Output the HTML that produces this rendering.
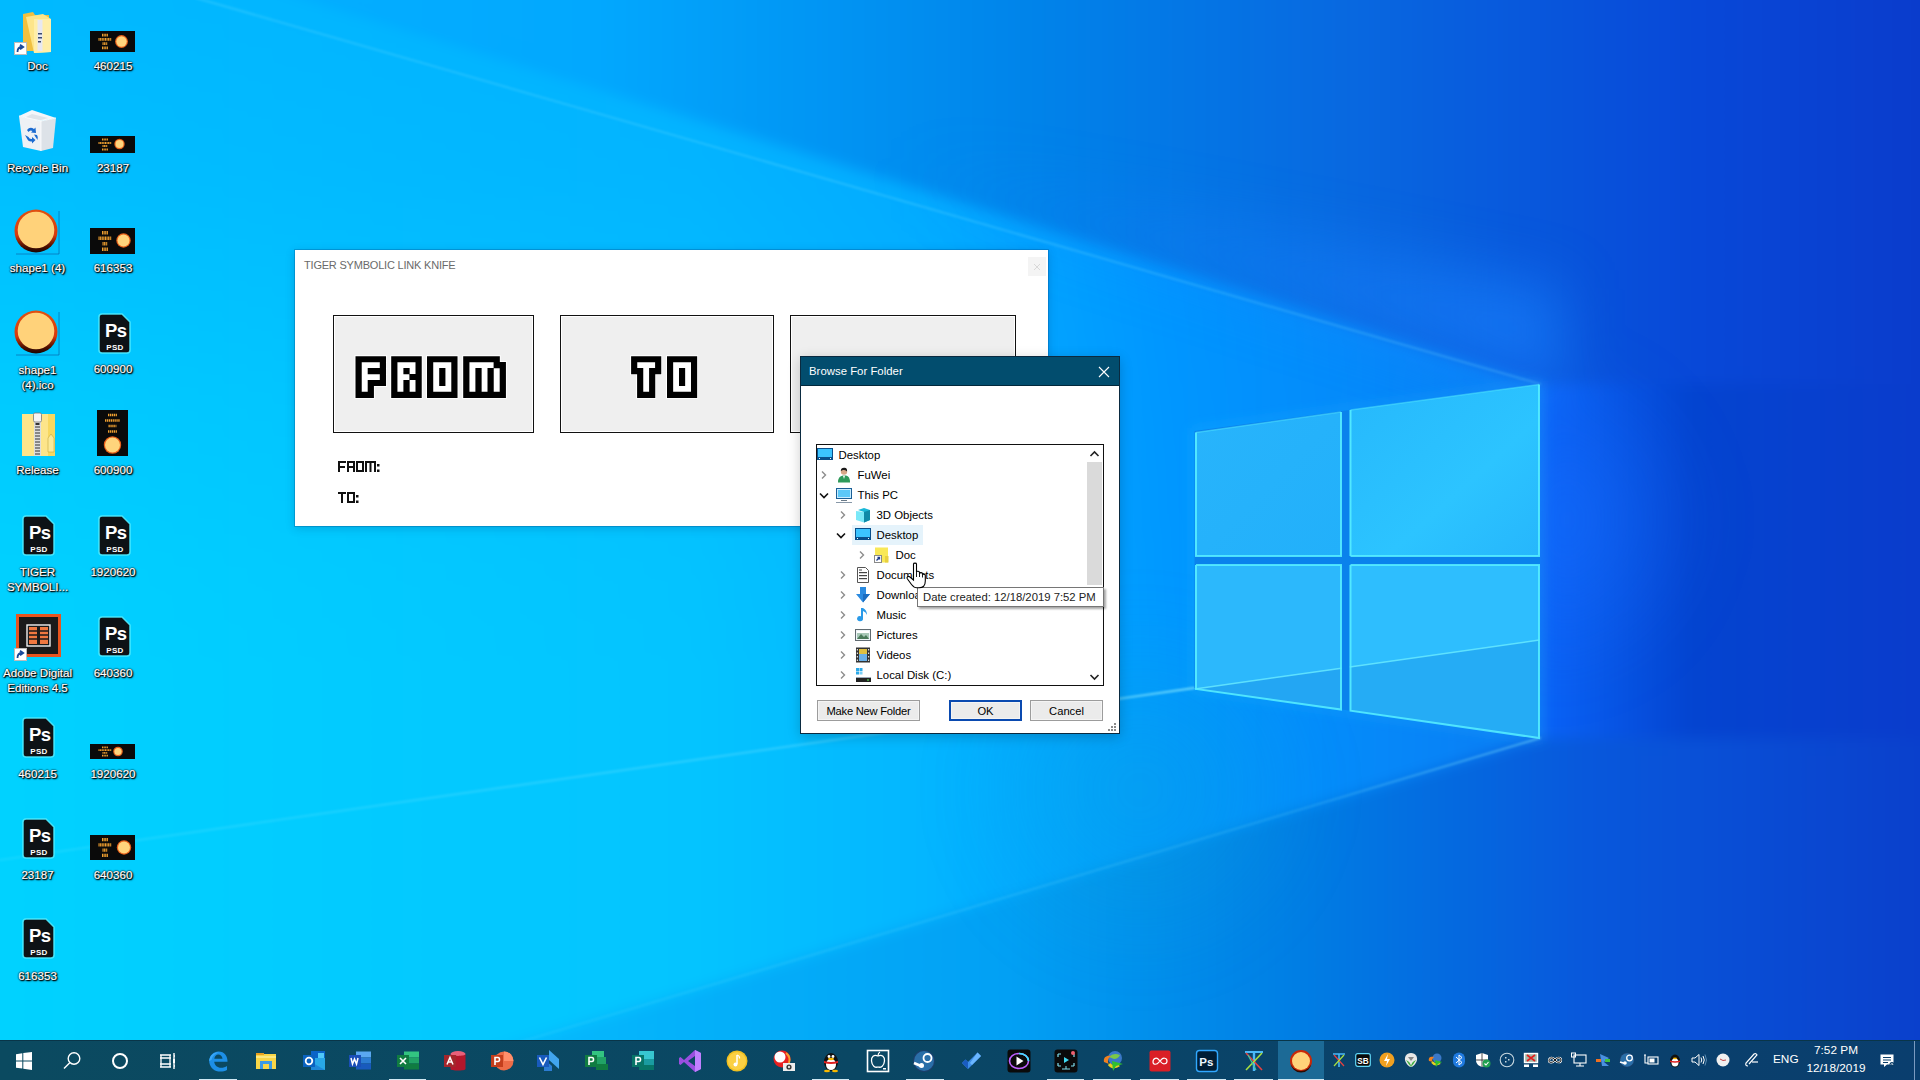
<!DOCTYPE html>
<html><head><meta charset="utf-8">
<style>
*{box-sizing:border-box}
html,body{margin:0;padding:0;width:1920px;height:1080px;overflow:hidden;font-family:"Liberation Sans",sans-serif;}
.abs{position:absolute}
#wall{position:absolute;left:0;top:0;width:1920px;height:1080px}
/* desktop icons */
.lbl{position:absolute;color:#fff;font-size:11.6px;line-height:15px;text-align:center;width:76px;-webkit-text-stroke:0.2px #fff;text-shadow:1px 1px 1px #000,0 0 1.5px #000,0 0 1.5px #000,1px 1px 2px rgba(0,0,0,.8);white-space:nowrap}
/* app window */
#app{position:absolute;left:295px;top:250px;width:753px;height:276px;background:#fff;box-shadow:0 0 0 1px rgba(0,60,120,.25),0 2px 9px rgba(0,40,90,.22)}
#app .title{position:absolute;left:9px;top:9px;font-size:11px;color:#6a6a6a;letter-spacing:-0.2px}
.bigbtn{position:absolute;top:65px;height:118px;border:1px solid #111;background:#efefef;box-shadow:inset 0 0 0 1px #fff}
.fclose{position:absolute;left:733px;top:7px;width:18px;height:19px;background:#f4f4f4}
/* dialog */
#dlg{position:absolute;left:800px;top:356px;width:320px;height:378px;background:#fff;border:1px solid #0a2a40;box-shadow:0 3px 12px rgba(0,0,0,.2)}
#dlg .tb{position:absolute;left:0;top:0;width:318px;height:29px;background:#024d6e;border-bottom:1px solid #02283c}
#dlg .tt{position:absolute;left:8px;top:8px;color:#fff;font-size:11.4px;}
.tree{position:absolute;left:15px;top:87px;width:288px;height:242px;border:1px solid #111;background:#fff;overflow:hidden}
.row{position:absolute;height:20px;font-size:11.4px;color:#000;line-height:20px;white-space:nowrap}
.btn{position:absolute;top:343px;height:21px;border:1px solid #9c9c9c;background:#ebebeb;font-size:11.2px;text-align:center;line-height:20.5px;color:#000;box-shadow:inset 0 0 0 1px #f4f4f4}
.tip{position:absolute;left:116px;top:230px;width:187px;height:20px;border:1px solid #767676;background:#fff;font-size:11.3px;line-height:18px;padding-left:5px;color:#222;white-space:nowrap;box-shadow:2px 2px 2px rgba(0,0,0,.35)}
/* taskbar */
#tb{position:absolute;left:0;top:1040px;width:1920px;height:40px;background:linear-gradient(90deg,#0b4a60 0%,#0a4764 45%,#0a416c 80%,#0a3e6e 100%);border-top:1px solid #093548}
.ind{position:absolute;top:38px;height:2px;background:#cfe8f3}
.ti{position:absolute;top:0;width:48px;height:40px}
</style></head>
<body>
<div style="position:absolute;left:0;top:0;width:1920px;height:1080px;overflow:hidden"><svg width="2080" height="1240" style="position:absolute;left:-80px;top:-80px;filter:blur(7px)"><defs>
<linearGradient id="gA" gradientUnits="userSpaceOnUse" x1="0" y1="0" x2="1540" y2="0">
<stop offset="0" stop-color="#00d2ff"/>
<stop offset="0.45" stop-color="#04c4ff"/>
<stop offset="0.6" stop-color="#04b6ff"/>
<stop offset="0.76" stop-color="#0098ff"/>
<stop offset="1" stop-color="#0a7cf4"/>
</linearGradient>
<linearGradient id="gB" gradientUnits="userSpaceOnUse" x1="200" y1="0" x2="1920" y2="0">
<stop offset="0" stop-color="#04b0ff"/>
<stop offset="0.23" stop-color="#02a8fe"/>
<stop offset="0.48" stop-color="#0084ea"/>
<stop offset="0.67" stop-color="#0868e0"/>
<stop offset="0.87" stop-color="#0848d8"/>
<stop offset="1" stop-color="#0a3ccc"/>
</linearGradient>
<linearGradient id="gC" gradientUnits="userSpaceOnUse" x1="1540" y1="0" x2="1920" y2="0">
<stop offset="0" stop-color="#0a64f8"/>
<stop offset="0.4" stop-color="#0444d0"/>
<stop offset="1" stop-color="#0a3ccc"/>
</linearGradient>
<linearGradient id="gD" gradientUnits="userSpaceOnUse" x1="400" y1="0" x2="1920" y2="0">
<stop offset="0" stop-color="#06c0ff"/>
<stop offset="0.4" stop-color="#02a0f4"/>
<stop offset="0.59" stop-color="#007ee4"/>
<stop offset="0.78" stop-color="#0858dc"/>
<stop offset="1" stop-color="#0a40cc"/>
</linearGradient>
<linearGradient id="gTopDark" gradientUnits="userSpaceOnUse" x1="0" y1="0" x2="0" y2="680"><stop offset="0" stop-color="#0088ff" stop-opacity="0.33"/><stop offset="0.25" stop-color="#0088ff" stop-opacity="0.26"/><stop offset="0.59" stop-color="#0088ff" stop-opacity="0.1"/><stop offset="0.85" stop-color="#0088ff" stop-opacity="0.02"/><stop offset="1" stop-color="#0088ff" stop-opacity="0"/></linearGradient>
<filter id="blur1" x="-5%" y="-5%" width="110%" height="110%"><feGaussianBlur stdDeviation="18"/></filter>
<filter id="blur2"><feGaussianBlur stdDeviation="1.2"/></filter>
<filter id="blur3" x="-20%" y="-20%" width="140%" height="140%"><feGaussianBlur stdDeviation="6"/></filter>
</defs><g transform="translate(80,80)">
<rect x="-40" y="-40" width="2000" height="1160" fill="url(#gA)"/>
<polygon points="200,-40 -40,-40 -40,-40 200,-40 1540,384 1540,738 396,1040 -40,1160 -40,-40" fill="url(#gA)"/>
<polygon points="189,-40 2000,-40 2000,384 1540,384" fill="url(#gB)"/>
<polygon points="1540,384 2000,384 2000,738 1540,738" fill="url(#gC)"/>
<polygon points="1540,738 2000,738 2000,1160 124,1160" fill="url(#gD)"/>
<polygon points="200,-40 1540,384 1540,700 -40,700 -40,-40" fill="url(#gTopDark)"/>

</g></svg></div>
<div style="position:absolute;left:0;top:0;width:1920px;height:1080px;overflow:hidden"><svg width="1920" height="1080" style="position:absolute;left:0;top:0;filter:blur(28px)"><defs><linearGradient id="gBand" gradientUnits="userSpaceOnUse" x1="1540" y1="0" x2="900" y2="0"><stop offset="0" stop-color="#1a84ff" stop-opacity="0.6"/><stop offset="0.5" stop-color="#1a84ff" stop-opacity="0.28"/><stop offset="1" stop-color="#1a84ff" stop-opacity="0"/></linearGradient><radialGradient id="gGlowR" gradientUnits="userSpaceOnUse" cx="1545" cy="520" r="170"><stop offset="0" stop-color="#1a70ff" stop-opacity="0.5"/><stop offset="1" stop-color="#1a70ff" stop-opacity="0"/></radialGradient></defs><polygon points="1560,390 900,195 900,150 1560,290" fill="url(#gBand)"/><rect x="1520" y="330" width="240" height="440" fill="url(#gGlowR)"/><radialGradient id="gFloor" gradientUnits="userSpaceOnUse" cx="1140" cy="790" r="190"><stop offset="0" stop-color="#10a8d0" stop-opacity="0.28"/><stop offset="1" stop-color="#10a8d0" stop-opacity="0"/></radialGradient><rect x="960" y="560" width="540" height="540" fill="url(#gFloor)"/></svg></div>
<svg id="wall" style="position:absolute;left:0;top:0" width="1920" height="1080" viewBox="0 0 1920 1080">
<defs><filter id="blur2"><feGaussianBlur stdDeviation="1.2"/></filter><filter id="blur3" x="-20%" y="-20%" width="140%" height="140%"><feGaussianBlur stdDeviation="6"/></filter></defs>

<!-- beam lines -->
<g filter="url(#blur2)" stroke-linecap="round">
<line x1="196" y1="-2" x2="1540" y2="384" stroke="#7fe6ff" stroke-opacity="0.24" stroke-width="2"/>
<linearGradient id="gBR" gradientUnits="userSpaceOnUse" x1="1540" y1="738" x2="396" y2="1079"><stop offset="0" stop-color="#8ff0ff" stop-opacity="0.45"/><stop offset="0.2" stop-color="#7fe6ff" stop-opacity="0.2"/><stop offset="1" stop-color="#7fe6ff" stop-opacity="0.12"/></linearGradient><line x1="1540" y1="738" x2="396" y2="1079" stroke="url(#gBR)" stroke-width="2"/>
<linearGradient id="gBL" gradientUnits="userSpaceOnUse" x1="1194" y1="688" x2="0" y2="860"><stop offset="0" stop-color="#9ff8ff" stop-opacity="0.7"/><stop offset="0.12" stop-color="#9ff0ff" stop-opacity="0.3"/><stop offset="1" stop-color="#9ff0ff" stop-opacity="0.12"/></linearGradient><line x1="1194" y1="688" x2="0" y2="860" stroke="url(#gBL)" stroke-width="2.2"/>
</g>
<!-- logo glow -->
<polygon points="1194.5,431 1540,384 1540,738.5 1194.5,688" fill="none" stroke="#40d8ff" stroke-opacity="0.18" stroke-width="6" filter="url(#blur3)"/>
<!-- gaps -->
<polygon points="1194.5,431 1540,384 1540,738.5 1194.5,688" fill="#0a82ec"/>
<!-- panes -->
<defs>
<linearGradient id="pTL" x1="0" y1="0" x2="1" y2="1"><stop offset="0" stop-color="#28b4fc"/><stop offset="1" stop-color="#22b0fa"/></linearGradient>
<linearGradient id="pTR" x1="0" y1="0" x2="1" y2="1"><stop offset="0" stop-color="#26b8fc"/><stop offset="0.6" stop-color="#2cc4ff"/><stop offset="1" stop-color="#26b6fc"/></linearGradient>
</defs>
<polygon points="1195,432.5 1341.5,412 1341.5,556 1195,556" fill="url(#pTL)"/>
<polygon points="1349.8,410 1539.5,384.5 1539.5,556 1349.8,556" fill="url(#pTR)"/>
<polygon points="1195,565 1341.5,565 1341.5,709.5 1195,689" fill="#2cb8fc"/>
<polygon points="1349.8,565 1539.5,565 1539.5,738 1349.8,710.7" fill="#2ebefe"/>
<!-- lower reflection region -->
<polygon points="1195,689 1341.5,668.2 1341.5,709.5" fill="#1890e8" fill-opacity="0.45"/>
<polygon points="1349.8,667 1539.5,640 1539.5,738 1349.8,710.7" fill="#1890e8" fill-opacity="0.4"/>
<g stroke="#70f0ff" stroke-opacity="0.75" stroke-width="1.5">
<line x1="1195" y1="689" x2="1341.5" y2="668.2"/>
<line x1="1349.8" y1="667" x2="1539.5" y2="640"/>
</g>
<!-- edges -->
<g fill="none" stroke="#58f0ff" stroke-width="2" stroke-opacity="0.85">
<path d="M1196 432.5 V556 H1341 V412 M1350.5 556 V410 M1539 384.5 V556 H1350.5"/>
<path d="M1196 565 V689 L1341 709.5 V565 H1196 M1350.5 565 V710.7 L1539 738 V565 H1350.5"/>
</g>
<g fill="none" stroke="#58f0ff" stroke-width="1.4" stroke-opacity="0.45">
<path d="M1196 432.5 L1341 412 M1350.5 410 L1539 384.5"/>
</g>
</svg>

<div id="icons"><svg class="abs" style="left:21px;top:11px" width="34" height="42" viewBox="0 0 34 42"><path d="M2 3 L12 1 L14 4 H28 V40 H2 Z" fill="#f0c040"/><path d="M5 6 L22 3 L30 8 V41 L13 42 Z" fill="#fde58a"/><path d="M13 8 L30 8 V41 L13 42 Z" fill="#ffeea8"/><path d="M19 9 V40" stroke="#e8e8f0" stroke-width="5"/><g fill="#3a4a70"><rect x="17" y="22" width="4" height="1.5"/><rect x="17" y="26" width="4" height="1.5"/><rect x="17" y="30" width="3" height="1.5"/></g></svg>
<svg class="abs" style="left:14px;top:42px" width="13" height="13" viewBox="0 0 13 13"><rect x="0.5" y="0.5" width="12" height="12" fill="#fff" stroke="#bbb"/><path d="M3.5 10 Q3.5 5 8 5 M6 2.8 L9.2 5 L6 7.2" stroke="#1a4a9a" stroke-width="1.8" fill="none"/></svg>
<div class="lbl" style="left:-0.5px;top:58.3px">Doc</div>
<svg class="abs" style="left:90px;top:31px" width="45" height="21" viewBox="0 0 45 21"><rect width="45" height="21" fill="#0a0a0a"/><path d="M12.0 4.1 H18.0" stroke="#f0a030" stroke-width="2.6" stroke-dasharray="1.1 0.5"/><path d="M8.5 8.4 H21.5" stroke="#f0a030" stroke-width="2.6" stroke-dasharray="1.1 0.5"/><path d="M12.5 12.6 H17.5" stroke="#f0a030" stroke-width="2.6" stroke-dasharray="1.1 0.5"/><path d="M12.0 16.9 H18.0" stroke="#f0a030" stroke-width="2.6" stroke-dasharray="1.1 0.5"/><circle cx="31.5" cy="10.5" r="6.4" fill="#e8601a"/><circle cx="31.5" cy="10.5" r="5.2" fill="#ffd47c"/></svg>
<div class="lbl" style="left:75px;top:58.3px">460215</div>
<svg class="abs" style="left:18px;top:109px" width="40" height="44" viewBox="0 0 40 44"><path d="M1 7 L14 1 L38 9 L23 12 Z" fill="#f4f6fa"/><path d="M4 10 L14 5 L30 9 L23 11 Z" fill="#dfe4ea"/><path d="M1 7 L23 12 L23 42 L5 38 Z" fill="#eef1f5"/><path d="M23 12 L38 9 L35 39 L23 42 Z" fill="#dde2e8"/><path d="M1 7 L23 12 L38 9 M23 12 V42" fill="none" stroke="#fff" stroke-width="0.8"/><path d="M9 21 Q12 17 16 20 L17.5 18.5 L18 24 L13 23.5 L14.5 22 Q12 20.5 10.5 23 Z" fill="#1a6ad0"/><path d="M7 26 L9.5 30.5 Q10.5 33 14 32.5 L14 34.5 L17.5 31 L14 28 L14 30 Q11.5 30.5 10.5 28 Z" fill="#1a6ad0"/><path d="M19 26 L16 25.5 L19.5 31 Q20.5 28 19 26 Z" fill="#1a6ad0"/></svg>
<div class="lbl" style="left:-0.5px;top:159.5px">Recycle Bin</div>
<svg class="abs" style="left:90px;top:136px" width="45" height="17" viewBox="0 0 45 17"><rect width="45" height="17" fill="#0a0a0a"/><path d="M12.0 3.6 H18.0" stroke="#f0a030" stroke-width="2.0" stroke-dasharray="1.1 0.5"/><path d="M8.5 6.9 H21.5" stroke="#f0a030" stroke-width="2.0" stroke-dasharray="1.1 0.5"/><path d="M12.5 10.1 H17.5" stroke="#f0a030" stroke-width="2.0" stroke-dasharray="1.1 0.5"/><path d="M12.0 13.4 H18.0" stroke="#f0a030" stroke-width="2.0" stroke-dasharray="1.1 0.5"/><circle cx="29.5" cy="8" r="5.2" fill="#e8601a"/><circle cx="29.5" cy="8" r="4" fill="#ffd47c"/></svg>
<div class="lbl" style="left:75px;top:159.5px">23187</div>
<svg class="abs" style="left:13.5px;top:209px" width="46" height="46" viewBox="0 0 46 46"><defs><linearGradient id="cr209" x1="0" y1="0" x2="0" y2="1"><stop offset="0" stop-color="#e05010"/><stop offset="0.6" stop-color="#d83a0c"/><stop offset="0.85" stop-color="#501000"/><stop offset="1" stop-color="#1a0400"/></linearGradient></defs><circle cx="22" cy="22" r="21.5" fill="url(#cr209)"/><circle cx="22" cy="21" r="18.3" fill="#ffd27a"/><path d="M45 2 V45 H2" fill="none" stroke="#0a5aa0" stroke-width="1" stroke-opacity="0.6"/></svg>
<div class="lbl" style="left:-0.5px;top:260.4px">shape1 (4)</div>
<svg class="abs" style="left:90px;top:228px" width="45" height="26" viewBox="0 0 45 26"><rect width="45" height="26" fill="#0a0a0a"/><path d="M12.0 4.8 H18.0" stroke="#f0a030" stroke-width="3.4" stroke-dasharray="1.1 0.5"/><path d="M8.5 10.2 H21.5" stroke="#f0a030" stroke-width="3.4" stroke-dasharray="1.1 0.5"/><path d="M12.5 15.8 H17.5" stroke="#f0a030" stroke-width="3.4" stroke-dasharray="1.1 0.5"/><path d="M12.0 21.2 H18.0" stroke="#f0a030" stroke-width="3.4" stroke-dasharray="1.1 0.5"/><circle cx="33.5" cy="12.5" r="7.2" fill="#e8601a"/><circle cx="33.5" cy="12.5" r="6" fill="#ffd47c"/></svg>
<div class="lbl" style="left:75px;top:260.4px">616353</div>
<svg class="abs" style="left:13.5px;top:309.5px" width="46" height="46" viewBox="0 0 46 46"><defs><linearGradient id="cr309" x1="0" y1="0" x2="0" y2="1"><stop offset="0" stop-color="#e05010"/><stop offset="0.6" stop-color="#d83a0c"/><stop offset="0.85" stop-color="#501000"/><stop offset="1" stop-color="#1a0400"/></linearGradient></defs><circle cx="22" cy="22" r="21.5" fill="url(#cr309)"/><circle cx="22" cy="21" r="18.3" fill="#ffd27a"/><path d="M45 2 V45 H2" fill="none" stroke="#0a5aa0" stroke-width="1" stroke-opacity="0.6"/></svg>
<div class="lbl" style="left:-0.5px;top:362.0px">shape1<br>(4).ico</div>
<svg class="abs" style="left:97.5px;top:312.5px" width="34" height="42" viewBox="0 0 34 42"><path d="M4 1 H24 L32 9 V37 Q32 40 29 40 H4 Q1 40 1 37 V4 Q1 1 4 1 Z" fill="#0d1216" stroke="#50ecff" stroke-opacity="0.9" stroke-width="1.5"/><text x="7" y="23.5" font-family="Liberation Sans" font-weight="bold" font-size="18.5" fill="#fff" letter-spacing="-0.5">Ps</text><text x="8.3" y="36.5" font-family="Liberation Sans" font-weight="bold" font-size="8" fill="#fff" letter-spacing="0.3">PSD</text></svg>
<div class="lbl" style="left:75px;top:361.2px">600900</div>
<svg class="abs" style="left:21px;top:412px" width="36" height="45" viewBox="0 0 36 45"><rect x="1" y="2" width="33" height="42" fill="#fde58a"/><rect x="27" y="2" width="7" height="42" fill="#f8d860"/><path d="M27 26 L30 22 L33 26 V40 H27 Z" fill="#fcea98" stroke="#c8a840" stroke-width="0.6"/><rect x="13" y="1" width="7" height="43" fill="#ddd"/><path d="M14 6 H19 M14 9 H19 M14 12 H19 M14 15 H19 M14 18 H19 M14 21 H19 M14 24 H19 M14 27 H19 M14 30 H19 M14 33 H19 M14 36 H19 M14 39 H19 M14 42 H19" stroke="#333" stroke-width="1"/><rect x="12.5" y="1" width="8" height="9" rx="1.5" fill="#f4f4f4" stroke="#777" stroke-width="0.8"/><rect x="15" y="11" width="3" height="2" fill="#333"/></svg>
<div class="lbl" style="left:-0.5px;top:462.0px">Release</div>
<svg class="abs" style="left:97px;top:410px" width="31" height="46" viewBox="0 0 31 46"><rect width="31" height="46" fill="#0a0a0a"/><path d="M11.0 5.0 H20.0" stroke="#f0a030" stroke-width="2.4" stroke-dasharray="1.3 0.6"/><path d="M8.0 10.5 H23.0" stroke="#f0a030" stroke-width="2.4" stroke-dasharray="1.3 0.6"/><path d="M11.5 16.0 H19.5" stroke="#f0a030" stroke-width="2.4" stroke-dasharray="1.3 0.6"/><path d="M11.0 21.5 H20.0" stroke="#f0a030" stroke-width="2.4" stroke-dasharray="1.3 0.6"/><circle cx="15.5" cy="35" r="8.7" fill="#e8601a"/><circle cx="15.5" cy="35" r="7.5" fill="#ffd47c"/></svg>
<div class="lbl" style="left:75px;top:462.0px">600900</div>
<svg class="abs" style="left:21.5px;top:514.5px" width="34" height="42" viewBox="0 0 34 42"><path d="M4 1 H24 L32 9 V37 Q32 40 29 40 H4 Q1 40 1 37 V4 Q1 1 4 1 Z" fill="#0d1216" stroke="#50ecff" stroke-opacity="0.9" stroke-width="1.5"/><text x="7" y="23.5" font-family="Liberation Sans" font-weight="bold" font-size="18.5" fill="#fff" letter-spacing="-0.5">Ps</text><text x="8.3" y="36.5" font-family="Liberation Sans" font-weight="bold" font-size="8" fill="#fff" letter-spacing="0.3">PSD</text></svg>
<div class="lbl" style="left:-0.5px;top:563.7px">TIGER<br>SYMBOLI...</div>
<svg class="abs" style="left:97.5px;top:514.5px" width="34" height="42" viewBox="0 0 34 42"><path d="M4 1 H24 L32 9 V37 Q32 40 29 40 H4 Q1 40 1 37 V4 Q1 1 4 1 Z" fill="#0d1216" stroke="#50ecff" stroke-opacity="0.9" stroke-width="1.5"/><text x="7" y="23.5" font-family="Liberation Sans" font-weight="bold" font-size="18.5" fill="#fff" letter-spacing="-0.5">Ps</text><text x="8.3" y="36.5" font-family="Liberation Sans" font-weight="bold" font-size="8" fill="#fff" letter-spacing="0.3">PSD</text></svg>
<div class="lbl" style="left:75px;top:563.7px">1920620</div>
<svg class="abs" style="left:16px;top:614px" width="45" height="43" viewBox="0 0 45 43"><rect x="1.5" y="1.5" width="42" height="40" fill="#1a1a1a" stroke="#e8541e" stroke-width="3"/><rect x="11" y="11" width="23" height="21" fill="none" stroke="#f0f0f0" stroke-width="1.4"/><g fill="#f07840"><rect x="13" y="13" width="8" height="17"/><rect x="24" y="13" width="8" height="17"/></g><g stroke="#1a1a1a" stroke-width="1.3"><path d="M13 17 H21 M13 21 H21 M13 25 H21 M24 17 H32 M24 21 H32 M24 25 H32"/></g></svg>
<svg class="abs" style="left:14px;top:648px" width="13" height="13" viewBox="0 0 13 13"><rect x="0.5" y="0.5" width="12" height="12" fill="#fff" stroke="#bbb"/><path d="M3.5 10 Q3.5 5 8 5 M6 2.8 L9.2 5 L6 7.2" stroke="#1a4a9a" stroke-width="1.8" fill="none"/></svg>
<div class="lbl" style="left:-0.5px;top:664.7px">Adobe Digital<br>Editions 4.5</div>
<svg class="abs" style="left:97.5px;top:615.5px" width="34" height="42" viewBox="0 0 34 42"><path d="M4 1 H24 L32 9 V37 Q32 40 29 40 H4 Q1 40 1 37 V4 Q1 1 4 1 Z" fill="#0d1216" stroke="#50ecff" stroke-opacity="0.9" stroke-width="1.5"/><text x="7" y="23.5" font-family="Liberation Sans" font-weight="bold" font-size="18.5" fill="#fff" letter-spacing="-0.5">Ps</text><text x="8.3" y="36.5" font-family="Liberation Sans" font-weight="bold" font-size="8" fill="#fff" letter-spacing="0.3">PSD</text></svg>
<div class="lbl" style="left:75px;top:664.7px">640360</div>
<svg class="abs" style="left:21.5px;top:716.5px" width="34" height="42" viewBox="0 0 34 42"><path d="M4 1 H24 L32 9 V37 Q32 40 29 40 H4 Q1 40 1 37 V4 Q1 1 4 1 Z" fill="#0d1216" stroke="#50ecff" stroke-opacity="0.9" stroke-width="1.5"/><text x="7" y="23.5" font-family="Liberation Sans" font-weight="bold" font-size="18.5" fill="#fff" letter-spacing="-0.5">Ps</text><text x="8.3" y="36.5" font-family="Liberation Sans" font-weight="bold" font-size="8" fill="#fff" letter-spacing="0.3">PSD</text></svg>
<div class="lbl" style="left:-0.5px;top:765.7px">460215</div>
<svg class="abs" style="left:90px;top:744px" width="45" height="15" viewBox="0 0 45 15"><rect width="45" height="15" fill="#0a0a0a"/><path d="M12.0 3.4 H18.0" stroke="#f0a030" stroke-width="1.7" stroke-dasharray="1.1 0.5"/><path d="M8.5 6.1 H21.5" stroke="#f0a030" stroke-width="1.7" stroke-dasharray="1.1 0.5"/><path d="M12.5 8.9 H17.5" stroke="#f0a030" stroke-width="1.7" stroke-dasharray="1.1 0.5"/><path d="M12.0 11.6 H18.0" stroke="#f0a030" stroke-width="1.7" stroke-dasharray="1.1 0.5"/><circle cx="28" cy="7.5" r="4.8" fill="#e8601a"/><circle cx="28" cy="7.5" r="3.6" fill="#ffd47c"/></svg>
<div class="lbl" style="left:75px;top:765.7px">1920620</div>
<svg class="abs" style="left:21.5px;top:817.5px" width="34" height="42" viewBox="0 0 34 42"><path d="M4 1 H24 L32 9 V37 Q32 40 29 40 H4 Q1 40 1 37 V4 Q1 1 4 1 Z" fill="#0d1216" stroke="#50ecff" stroke-opacity="0.9" stroke-width="1.5"/><text x="7" y="23.5" font-family="Liberation Sans" font-weight="bold" font-size="18.5" fill="#fff" letter-spacing="-0.5">Ps</text><text x="8.3" y="36.5" font-family="Liberation Sans" font-weight="bold" font-size="8" fill="#fff" letter-spacing="0.3">PSD</text></svg>
<div class="lbl" style="left:-0.5px;top:866.7px">23187</div>
<svg class="abs" style="left:90px;top:835px" width="45" height="25" viewBox="0 0 45 25"><rect width="45" height="25" fill="#0a0a0a"/><path d="M12.0 4.6 H18.0" stroke="#f0a030" stroke-width="3.3" stroke-dasharray="1.1 0.5"/><path d="M8.5 9.9 H21.5" stroke="#f0a030" stroke-width="3.3" stroke-dasharray="1.1 0.5"/><path d="M12.5 15.1 H17.5" stroke="#f0a030" stroke-width="3.3" stroke-dasharray="1.1 0.5"/><path d="M12.0 20.4 H18.0" stroke="#f0a030" stroke-width="3.3" stroke-dasharray="1.1 0.5"/><circle cx="34" cy="12.5" r="7.2" fill="#e8601a"/><circle cx="34" cy="12.5" r="6" fill="#ffd47c"/></svg>
<div class="lbl" style="left:75px;top:866.7px">640360</div>
<svg class="abs" style="left:21.5px;top:917.5px" width="34" height="42" viewBox="0 0 34 42"><path d="M4 1 H24 L32 9 V37 Q32 40 29 40 H4 Q1 40 1 37 V4 Q1 1 4 1 Z" fill="#0d1216" stroke="#50ecff" stroke-opacity="0.9" stroke-width="1.5"/><text x="7" y="23.5" font-family="Liberation Sans" font-weight="bold" font-size="18.5" fill="#fff" letter-spacing="-0.5">Ps</text><text x="8.3" y="36.5" font-family="Liberation Sans" font-weight="bold" font-size="8" fill="#fff" letter-spacing="0.3">PSD</text></svg>
<div class="lbl" style="left:-0.5px;top:967.7px">616353</div></div>

<div id="app">
  <div class="title">TIGER SYMBOLIC LINK KNIFE</div>
  <div class="fclose"><svg class="abs" style="left:5px;top:6px" width="8" height="8"><path d="M1 1 L7 7 M7 1 L1 7" stroke="#d8d8d8" stroke-width="1"/></svg></div>
  <div class="bigbtn" style="left:38px;width:201px"></div>
  <div class="bigbtn" style="left:265px;width:214px"></div>
  <div class="bigbtn" style="left:495px;width:226px"></div>
  <svg class="abs" style="left:0;top:0" width="753" height="276"><path fill="#fff" d="M59.5 105.2h8.1v7.9h-8.1zM65.6 105.2h8.1v7.9h-8.1zM71.7 105.2h8.1v7.9h-8.1zM77.7 105.2h8.1v7.9h-8.1zM83.8 105.2h8.1v7.9h-8.1zM59.5 111.1h8.1v7.9h-8.1zM83.8 111.1h8.1v7.9h-8.1zM59.5 117.1h8.1v7.9h-8.1zM71.7 117.1h8.1v7.9h-8.1zM77.7 117.1h8.1v7.9h-8.1zM83.8 117.1h8.1v7.9h-8.1zM59.5 123.0h8.1v7.9h-8.1zM83.8 123.0h8.1v7.9h-8.1zM59.5 129.0h8.1v7.9h-8.1zM71.7 129.0h8.1v7.9h-8.1zM77.7 129.0h8.1v7.9h-8.1zM83.8 129.0h8.1v7.9h-8.1zM59.5 134.9h8.1v7.9h-8.1zM71.7 134.9h8.1v7.9h-8.1zM59.5 140.8h8.1v7.9h-8.1zM65.6 140.8h8.1v7.9h-8.1zM71.7 140.8h8.1v7.9h-8.1zM95.2 105.2h8.1v7.9h-8.1zM101.3 105.2h8.1v7.9h-8.1zM107.4 105.2h8.1v7.9h-8.1zM113.4 105.2h8.1v7.9h-8.1zM119.5 105.2h8.1v7.9h-8.1zM95.2 111.1h8.1v7.9h-8.1zM119.5 111.1h8.1v7.9h-8.1zM95.2 117.1h8.1v7.9h-8.1zM107.4 117.1h8.1v7.9h-8.1zM119.5 117.1h8.1v7.9h-8.1zM95.2 123.0h8.1v7.9h-8.1zM113.4 123.0h8.1v7.9h-8.1zM119.5 123.0h8.1v7.9h-8.1zM95.2 129.0h8.1v7.9h-8.1zM107.4 129.0h8.1v7.9h-8.1zM119.5 129.0h8.1v7.9h-8.1zM95.2 134.9h8.1v7.9h-8.1zM107.4 134.9h8.1v7.9h-8.1zM119.5 134.9h8.1v7.9h-8.1zM95.2 140.8h8.1v7.9h-8.1zM101.3 140.8h8.1v7.9h-8.1zM107.4 140.8h8.1v7.9h-8.1zM113.4 140.8h8.1v7.9h-8.1zM119.5 140.8h8.1v7.9h-8.1zM131.0 105.2h8.1v7.9h-8.1zM137.1 105.2h8.1v7.9h-8.1zM143.2 105.2h8.1v7.9h-8.1zM149.2 105.2h8.1v7.9h-8.1zM155.3 105.2h8.1v7.9h-8.1zM131.0 111.1h8.1v7.9h-8.1zM155.3 111.1h8.1v7.9h-8.1zM131.0 117.1h8.1v7.9h-8.1zM143.2 117.1h8.1v7.9h-8.1zM155.3 117.1h8.1v7.9h-8.1zM131.0 123.0h8.1v7.9h-8.1zM143.2 123.0h8.1v7.9h-8.1zM155.3 123.0h8.1v7.9h-8.1zM131.0 129.0h8.1v7.9h-8.1zM143.2 129.0h8.1v7.9h-8.1zM155.3 129.0h8.1v7.9h-8.1zM131.0 134.9h8.1v7.9h-8.1zM155.3 134.9h8.1v7.9h-8.1zM131.0 140.8h8.1v7.9h-8.1zM137.1 140.8h8.1v7.9h-8.1zM143.2 140.8h8.1v7.9h-8.1zM149.2 140.8h8.1v7.9h-8.1zM155.3 140.8h8.1v7.9h-8.1zM167.2 105.2h8.1v7.9h-8.1zM173.3 105.2h8.1v7.9h-8.1zM179.4 105.2h8.1v7.9h-8.1zM185.4 105.2h8.1v7.9h-8.1zM191.5 105.2h8.1v7.9h-8.1zM197.6 105.2h8.1v7.9h-8.1zM167.2 111.1h8.1v7.9h-8.1zM197.6 111.1h8.1v7.9h-8.1zM203.7 111.1h8.1v7.9h-8.1zM167.2 117.1h8.1v7.9h-8.1zM179.4 117.1h8.1v7.9h-8.1zM191.5 117.1h8.1v7.9h-8.1zM203.7 117.1h8.1v7.9h-8.1zM167.2 123.0h8.1v7.9h-8.1zM179.4 123.0h8.1v7.9h-8.1zM191.5 123.0h8.1v7.9h-8.1zM203.7 123.0h8.1v7.9h-8.1zM167.2 129.0h8.1v7.9h-8.1zM179.4 129.0h8.1v7.9h-8.1zM191.5 129.0h8.1v7.9h-8.1zM203.7 129.0h8.1v7.9h-8.1zM167.2 134.9h8.1v7.9h-8.1zM179.4 134.9h8.1v7.9h-8.1zM191.5 134.9h8.1v7.9h-8.1zM203.7 134.9h8.1v7.9h-8.1zM167.2 140.8h8.1v7.9h-8.1zM173.3 140.8h8.1v7.9h-8.1zM179.4 140.8h8.1v7.9h-8.1zM185.4 140.8h8.1v7.9h-8.1zM191.5 140.8h8.1v7.9h-8.1zM197.6 140.8h8.1v7.9h-8.1zM203.7 140.8h8.1v7.9h-8.1zM66.6 112.1h6.2v6.0h-6.2zM72.7 112.1h6.2v6.0h-6.2zM78.7 112.1h6.2v6.0h-6.2zM66.6 118.1h6.2v6.0h-6.2zM66.6 124.0h6.2v6.0h-6.2zM72.7 124.0h6.2v6.0h-6.2zM78.7 124.0h6.2v6.0h-6.2zM66.6 130.0h6.2v6.0h-6.2zM66.6 135.9h6.2v6.0h-6.2zM102.3 112.1h6.2v6.0h-6.2zM108.4 112.1h6.2v6.0h-6.2zM114.4 112.1h6.2v6.0h-6.2zM102.3 118.1h6.2v6.0h-6.2zM114.4 118.1h6.2v6.0h-6.2zM102.3 124.0h6.2v6.0h-6.2zM108.4 124.0h6.2v6.0h-6.2zM102.3 130.0h6.2v6.0h-6.2zM114.4 130.0h6.2v6.0h-6.2zM102.3 135.9h6.2v6.0h-6.2zM114.4 135.9h6.2v6.0h-6.2zM138.1 112.1h6.2v6.0h-6.2zM144.2 112.1h6.2v6.0h-6.2zM150.2 112.1h6.2v6.0h-6.2zM138.1 118.1h6.2v6.0h-6.2zM150.2 118.1h6.2v6.0h-6.2zM138.1 124.0h6.2v6.0h-6.2zM150.2 124.0h6.2v6.0h-6.2zM138.1 130.0h6.2v6.0h-6.2zM150.2 130.0h6.2v6.0h-6.2zM138.1 135.9h6.2v6.0h-6.2zM144.2 135.9h6.2v6.0h-6.2zM150.2 135.9h6.2v6.0h-6.2zM174.3 112.1h6.2v6.0h-6.2zM180.4 112.1h6.2v6.0h-6.2zM186.4 112.1h6.2v6.0h-6.2zM192.5 112.1h6.2v6.0h-6.2zM174.3 118.1h6.2v6.0h-6.2zM186.4 118.1h6.2v6.0h-6.2zM198.6 118.1h6.2v6.0h-6.2zM174.3 124.0h6.2v6.0h-6.2zM186.4 124.0h6.2v6.0h-6.2zM198.6 124.0h6.2v6.0h-6.2zM174.3 130.0h6.2v6.0h-6.2zM186.4 130.0h6.2v6.0h-6.2zM198.6 130.0h6.2v6.0h-6.2zM174.3 135.9h6.2v6.0h-6.2zM186.4 135.9h6.2v6.0h-6.2zM198.6 135.9h6.2v6.0h-6.2zM335.1 105.2h8.0v7.9h-8.0zM341.1 105.2h8.0v7.9h-8.0zM347.1 105.2h8.0v7.9h-8.0zM353.1 105.2h8.0v7.9h-8.0zM359.1 105.2h8.0v7.9h-8.0zM335.1 111.1h8.0v7.9h-8.0zM359.1 111.1h8.0v7.9h-8.0zM335.1 117.1h8.0v7.9h-8.0zM341.1 117.1h8.0v7.9h-8.0zM353.1 117.1h8.0v7.9h-8.0zM359.1 117.1h8.0v7.9h-8.0zM341.1 123.0h8.0v7.9h-8.0zM353.1 123.0h8.0v7.9h-8.0zM341.1 129.0h8.0v7.9h-8.0zM353.1 129.0h8.0v7.9h-8.0zM341.1 134.9h8.0v7.9h-8.0zM353.1 134.9h8.0v7.9h-8.0zM341.1 140.8h8.0v7.9h-8.0zM347.1 140.8h8.0v7.9h-8.0zM353.1 140.8h8.0v7.9h-8.0zM371.0 105.2h8.0v7.9h-8.0zM377.0 105.2h8.0v7.9h-8.0zM383.0 105.2h8.0v7.9h-8.0zM389.0 105.2h8.0v7.9h-8.0zM395.0 105.2h8.0v7.9h-8.0zM371.0 111.1h8.0v7.9h-8.0zM395.0 111.1h8.0v7.9h-8.0zM371.0 117.1h8.0v7.9h-8.0zM383.0 117.1h8.0v7.9h-8.0zM395.0 117.1h8.0v7.9h-8.0zM371.0 123.0h8.0v7.9h-8.0zM383.0 123.0h8.0v7.9h-8.0zM395.0 123.0h8.0v7.9h-8.0zM371.0 129.0h8.0v7.9h-8.0zM383.0 129.0h8.0v7.9h-8.0zM395.0 129.0h8.0v7.9h-8.0zM371.0 134.9h8.0v7.9h-8.0zM395.0 134.9h8.0v7.9h-8.0zM371.0 140.8h8.0v7.9h-8.0zM377.0 140.8h8.0v7.9h-8.0zM383.0 140.8h8.0v7.9h-8.0zM389.0 140.8h8.0v7.9h-8.0zM395.0 140.8h8.0v7.9h-8.0zM342.1 112.1h6.1v6.0h-6.1zM348.1 112.1h6.1v6.0h-6.1zM354.1 112.1h6.1v6.0h-6.1zM348.1 118.1h6.1v6.0h-6.1zM348.1 124.0h6.1v6.0h-6.1zM348.1 130.0h6.1v6.0h-6.1zM348.1 135.9h6.1v6.0h-6.1zM378.0 112.1h6.1v6.0h-6.1zM384.0 112.1h6.1v6.0h-6.1zM390.0 112.1h6.1v6.0h-6.1zM378.0 118.1h6.1v6.0h-6.1zM390.0 118.1h6.1v6.0h-6.1zM378.0 124.0h6.1v6.0h-6.1zM390.0 124.0h6.1v6.0h-6.1zM378.0 130.0h6.1v6.0h-6.1zM390.0 130.0h6.1v6.0h-6.1zM378.0 135.9h6.1v6.0h-6.1zM384.0 135.9h6.1v6.0h-6.1zM390.0 135.9h6.1v6.0h-6.1z"/><path fill="#000" d="M60.5 106.2h6.23v6.09h-6.23zM66.6 106.2h6.23v6.09h-6.23zM72.7 106.2h6.23v6.09h-6.23zM78.7 106.2h6.23v6.09h-6.23zM84.8 106.2h6.23v6.09h-6.23zM60.5 112.1h6.23v6.09h-6.23zM84.8 112.1h6.23v6.09h-6.23zM60.5 118.1h6.23v6.09h-6.23zM72.7 118.1h6.23v6.09h-6.23zM78.7 118.1h6.23v6.09h-6.23zM84.8 118.1h6.23v6.09h-6.23zM60.5 124.0h6.23v6.09h-6.23zM84.8 124.0h6.23v6.09h-6.23zM60.5 130.0h6.23v6.09h-6.23zM72.7 130.0h6.23v6.09h-6.23zM78.7 130.0h6.23v6.09h-6.23zM84.8 130.0h6.23v6.09h-6.23zM60.5 135.9h6.23v6.09h-6.23zM72.7 135.9h6.23v6.09h-6.23zM60.5 141.8h6.23v6.09h-6.23zM66.6 141.8h6.23v6.09h-6.23zM72.7 141.8h6.23v6.09h-6.23zM96.2 106.2h6.23v6.09h-6.23zM102.3 106.2h6.23v6.09h-6.23zM108.4 106.2h6.23v6.09h-6.23zM114.4 106.2h6.23v6.09h-6.23zM120.5 106.2h6.23v6.09h-6.23zM96.2 112.1h6.23v6.09h-6.23zM120.5 112.1h6.23v6.09h-6.23zM96.2 118.1h6.23v6.09h-6.23zM108.4 118.1h6.23v6.09h-6.23zM120.5 118.1h6.23v6.09h-6.23zM96.2 124.0h6.23v6.09h-6.23zM114.4 124.0h6.23v6.09h-6.23zM120.5 124.0h6.23v6.09h-6.23zM96.2 130.0h6.23v6.09h-6.23zM108.4 130.0h6.23v6.09h-6.23zM120.5 130.0h6.23v6.09h-6.23zM96.2 135.9h6.23v6.09h-6.23zM108.4 135.9h6.23v6.09h-6.23zM120.5 135.9h6.23v6.09h-6.23zM96.2 141.8h6.23v6.09h-6.23zM102.3 141.8h6.23v6.09h-6.23zM108.4 141.8h6.23v6.09h-6.23zM114.4 141.8h6.23v6.09h-6.23zM120.5 141.8h6.23v6.09h-6.23zM132.0 106.2h6.23v6.09h-6.23zM138.1 106.2h6.23v6.09h-6.23zM144.2 106.2h6.23v6.09h-6.23zM150.2 106.2h6.23v6.09h-6.23zM156.3 106.2h6.23v6.09h-6.23zM132.0 112.1h6.23v6.09h-6.23zM156.3 112.1h6.23v6.09h-6.23zM132.0 118.1h6.23v6.09h-6.23zM144.2 118.1h6.23v6.09h-6.23zM156.3 118.1h6.23v6.09h-6.23zM132.0 124.0h6.23v6.09h-6.23zM144.2 124.0h6.23v6.09h-6.23zM156.3 124.0h6.23v6.09h-6.23zM132.0 130.0h6.23v6.09h-6.23zM144.2 130.0h6.23v6.09h-6.23zM156.3 130.0h6.23v6.09h-6.23zM132.0 135.9h6.23v6.09h-6.23zM156.3 135.9h6.23v6.09h-6.23zM132.0 141.8h6.23v6.09h-6.23zM138.1 141.8h6.23v6.09h-6.23zM144.2 141.8h6.23v6.09h-6.23zM150.2 141.8h6.23v6.09h-6.23zM156.3 141.8h6.23v6.09h-6.23zM168.2 106.2h6.23v6.09h-6.23zM174.3 106.2h6.23v6.09h-6.23zM180.4 106.2h6.23v6.09h-6.23zM186.4 106.2h6.23v6.09h-6.23zM192.5 106.2h6.23v6.09h-6.23zM198.6 106.2h6.23v6.09h-6.23zM168.2 112.1h6.23v6.09h-6.23zM198.6 112.1h6.23v6.09h-6.23zM204.7 112.1h6.23v6.09h-6.23zM168.2 118.1h6.23v6.09h-6.23zM180.4 118.1h6.23v6.09h-6.23zM192.5 118.1h6.23v6.09h-6.23zM204.7 118.1h6.23v6.09h-6.23zM168.2 124.0h6.23v6.09h-6.23zM180.4 124.0h6.23v6.09h-6.23zM192.5 124.0h6.23v6.09h-6.23zM204.7 124.0h6.23v6.09h-6.23zM168.2 130.0h6.23v6.09h-6.23zM180.4 130.0h6.23v6.09h-6.23zM192.5 130.0h6.23v6.09h-6.23zM204.7 130.0h6.23v6.09h-6.23zM168.2 135.9h6.23v6.09h-6.23zM180.4 135.9h6.23v6.09h-6.23zM192.5 135.9h6.23v6.09h-6.23zM204.7 135.9h6.23v6.09h-6.23zM168.2 141.8h6.23v6.09h-6.23zM174.3 141.8h6.23v6.09h-6.23zM180.4 141.8h6.23v6.09h-6.23zM186.4 141.8h6.23v6.09h-6.23zM192.5 141.8h6.23v6.09h-6.23zM198.6 141.8h6.23v6.09h-6.23zM204.7 141.8h6.23v6.09h-6.23zM336.1 106.2h6.15v6.09h-6.15zM342.1 106.2h6.15v6.09h-6.15zM348.1 106.2h6.15v6.09h-6.15zM354.1 106.2h6.15v6.09h-6.15zM360.1 106.2h6.15v6.09h-6.15zM336.1 112.1h6.15v6.09h-6.15zM360.1 112.1h6.15v6.09h-6.15zM336.1 118.1h6.15v6.09h-6.15zM342.1 118.1h6.15v6.09h-6.15zM354.1 118.1h6.15v6.09h-6.15zM360.1 118.1h6.15v6.09h-6.15zM342.1 124.0h6.15v6.09h-6.15zM354.1 124.0h6.15v6.09h-6.15zM342.1 130.0h6.15v6.09h-6.15zM354.1 130.0h6.15v6.09h-6.15zM342.1 135.9h6.15v6.09h-6.15zM354.1 135.9h6.15v6.09h-6.15zM342.1 141.8h6.15v6.09h-6.15zM348.1 141.8h6.15v6.09h-6.15zM354.1 141.8h6.15v6.09h-6.15zM372.0 106.2h6.15v6.09h-6.15zM378.0 106.2h6.15v6.09h-6.15zM384.0 106.2h6.15v6.09h-6.15zM390.0 106.2h6.15v6.09h-6.15zM396.0 106.2h6.15v6.09h-6.15zM372.0 112.1h6.15v6.09h-6.15zM396.0 112.1h6.15v6.09h-6.15zM372.0 118.1h6.15v6.09h-6.15zM384.0 118.1h6.15v6.09h-6.15zM396.0 118.1h6.15v6.09h-6.15zM372.0 124.0h6.15v6.09h-6.15zM384.0 124.0h6.15v6.09h-6.15zM396.0 124.0h6.15v6.09h-6.15zM372.0 130.0h6.15v6.09h-6.15zM384.0 130.0h6.15v6.09h-6.15zM396.0 130.0h6.15v6.09h-6.15zM372.0 135.9h6.15v6.09h-6.15zM396.0 135.9h6.15v6.09h-6.15zM372.0 141.8h6.15v6.09h-6.15zM378.0 141.8h6.15v6.09h-6.15zM384.0 141.8h6.15v6.09h-6.15zM390.0 141.8h6.15v6.09h-6.15zM396.0 141.8h6.15v6.09h-6.15z"/><g fill="#111">
<rect x="43" y="211" width="2" height="11"/><rect x="43" y="211" width="8" height="2"/><rect x="43" y="216" width="7" height="2"/>
<rect x="52" y="211" width="2" height="11"/><rect x="52" y="211" width="8" height="2"/><rect x="58" y="211" width="2" height="6"/><rect x="52" y="216" width="8" height="2"/><rect x="58" y="218" width="2" height="4"/>
<rect x="61" y="211" width="2" height="11"/><rect x="61" y="211" width="8" height="2"/><rect x="67" y="211" width="2" height="11"/><rect x="61" y="220" width="8" height="2"/>
<rect x="70" y="211" width="11" height="2"/><rect x="70" y="211" width="2" height="11"/><rect x="74.5" y="211" width="2" height="11"/><rect x="79" y="211" width="2" height="11"/>
<rect x="82" y="214" width="2.5" height="2.5"/><rect x="82" y="219.5" width="2.5" height="2.5"/>
<rect x="43" y="242" width="8" height="2"/><rect x="46" y="242" width="2" height="11"/>
<rect x="52" y="242" width="2" height="11"/><rect x="52" y="242" width="8" height="2"/><rect x="58" y="242" width="2" height="11"/><rect x="52" y="251" width="8" height="2"/>
<rect x="61" y="245" width="2.5" height="2.5"/><rect x="61" y="250.5" width="2.5" height="2.5"/>
</g></svg>
</div>

<div id="dlg">
  <div class="tb"><div class="tt">Browse For Folder</div></div>
  <div class="tree"><div class="abs" style="left:35px;top:80px;width:71px;height:20px;background:#e5f3fb"></div><svg class="abs" style="left:0px;top:2px" width="16" height="16"><rect x="0.5" y="1.5" width="15" height="11" fill="#2aa8e8" stroke="#0a4f8a"/><rect x="1" y="2" width="14" height="8" fill="#3cc4ff"/><rect x="1" y="10" width="14" height="2" fill="#0a4f8a"/><rect x="2" y="11" width="1" height="1" fill="#fff"/><rect x="13" y="11" width="1" height="1" fill="#fff"/></svg><div class="row" style="left:21.5px;top:0px">Desktop</div><svg class="abs" style="left:3px;top:25px" width="8" height="10"><path d="M2 1.5 L5.5 5 L2 8.5" fill="none" stroke="#8c8c8c" stroke-width="1.4"/></svg><svg class="abs" style="left:19px;top:22px" width="16" height="16"><circle cx="8" cy="4.5" r="3.2" fill="#d8a888"/><path d="M4.8 4 Q5 0.5 8.5 0.8 Q11.5 1 11 4.5 Q10 2.5 7 3 Z" fill="#1a1a1a"/><path d="M2 15.5 Q2 9 7 8.5 L10 8.5 Q14 9 14 15.5 Z" fill="#2e9a5a"/><path d="M7 8.7 L8 12 L9 8.7 Z" fill="#fff"/></svg><div class="row" style="left:40.5px;top:20px">FuWei</div><svg class="abs" style="left:2px;top:47px" width="10" height="8"><path d="M1 1.5 L5 5.5 L9 1.5" fill="none" stroke="#111" stroke-width="1.6"/></svg><svg class="abs" style="left:19px;top:42px" width="16" height="16"><rect x="0.5" y="1.5" width="15" height="10" fill="#c8ecff" stroke="#1b5f96"/><rect x="2" y="3" width="12" height="7" fill="#5cc8f8"/><rect x="5" y="13" width="6" height="1" fill="#6a7a88"/><rect x="0" y="15" width="16" height="1" fill="#8898a8"/></svg><div class="row" style="left:40.5px;top:40px">This PC</div><svg class="abs" style="left:22px;top:65px" width="8" height="10"><path d="M2 1.5 L5.5 5 L2 8.5" fill="none" stroke="#8c8c8c" stroke-width="1.4"/></svg><svg class="abs" style="left:38px;top:62px" width="16" height="16"><path d="M3 3 L9 1 L15 3 L15 13 L9 15.5 L9 5 Z" fill="#1ab8d8"/><path d="M1 4 L9 5 L9 15.5 L1 13 Z" fill="#7ae8f8"/><path d="M9 5 L15 3 L15 13 L9 15.5Z" fill="#0f8aa8"/></svg><div class="row" style="left:59.5px;top:60px">3D Objects</div><svg class="abs" style="left:19px;top:87px" width="10" height="8"><path d="M1 1.5 L5 5.5 L9 1.5" fill="none" stroke="#111" stroke-width="1.6"/></svg><svg class="abs" style="left:38px;top:82px" width="16" height="16"><rect x="0.5" y="1.5" width="15" height="11" fill="#2aa8e8" stroke="#0a4f8a"/><rect x="1" y="2" width="14" height="8" fill="#3cc4ff"/><rect x="1" y="10" width="14" height="2" fill="#0a4f8a"/><rect x="2" y="11" width="1" height="1" fill="#fff"/><rect x="13" y="11" width="1" height="1" fill="#fff"/></svg><div class="row" style="left:59.5px;top:80px">Desktop</div><svg class="abs" style="left:41px;top:105px" width="8" height="10"><path d="M2 1.5 L5.5 5 L2 8.5" fill="none" stroke="#8c8c8c" stroke-width="1.4"/></svg><svg class="abs" style="left:57px;top:102px" width="16" height="16"><rect x="1" y="0.5" width="13" height="15" fill="#f8e858"/><rect x="11" y="9" width="3.5" height="6.5" fill="#e8d040"/><rect x="0.5" y="8.5" width="7" height="7" fill="#fff" stroke="#888"/><path d="M2.5 13.5 L5.5 10.5 M3.5 10.5 H5.5 V12.5" stroke="#1a3a8a" stroke-width="1.3" fill="none"/></svg><div class="row" style="left:78.5px;top:100px">Doc</div><svg class="abs" style="left:22px;top:125px" width="8" height="10"><path d="M2 1.5 L5.5 5 L2 8.5" fill="none" stroke="#8c8c8c" stroke-width="1.4"/></svg><svg class="abs" style="left:38px;top:122px" width="16" height="16"><path d="M2.5 0.5 H10.5 L13.5 3.5 V15.5 H2.5 Z" fill="#fff" stroke="#555"/><rect x="4" y="5" width="8" height="1.2" fill="#444"/><rect x="4" y="8" width="8" height="1.2" fill="#444"/><rect x="4" y="11" width="8" height="1.2" fill="#444"/><rect x="4" y="2.5" width="3" height="1" fill="#444"/></svg><div class="row" style="left:59.5px;top:120px">Documents</div><svg class="abs" style="left:22px;top:145px" width="8" height="10"><path d="M2 1.5 L5.5 5 L2 8.5" fill="none" stroke="#8c8c8c" stroke-width="1.4"/></svg><svg class="abs" style="left:38px;top:142px" width="16" height="16"><path d="M5 0 H11 V7 H15 L8 15.5 L1 7 H5 Z" fill="#2a8ae0"/><path d="M8 7 V15.5 L15 7 Z" fill="#1b6cc0"/></svg><div class="row" style="left:59.5px;top:140px">Downloads</div><svg class="abs" style="left:22px;top:165px" width="8" height="10"><path d="M2 1.5 L5.5 5 L2 8.5" fill="none" stroke="#8c8c8c" stroke-width="1.4"/></svg><svg class="abs" style="left:38px;top:162px" width="16" height="16"><path d="M8 1 L8 11.5 A3 2.5 0 1 1 6 9.3 L6 1 Z" fill="#2a9ae8"/><path d="M8 1 Q12 3 12 8 Q11 5 8 4 Z" fill="#2a9ae8"/></svg><div class="row" style="left:59.5px;top:160px">Music</div><svg class="abs" style="left:22px;top:185px" width="8" height="10"><path d="M2 1.5 L5.5 5 L2 8.5" fill="none" stroke="#8c8c8c" stroke-width="1.4"/></svg><svg class="abs" style="left:38px;top:182px" width="16" height="16"><rect x="0.5" y="2.5" width="15" height="11" fill="#eef4f8" stroke="#606a70"/><rect x="2" y="4" width="12" height="8" fill="#a8c8b8"/><path d="M2 12 L6 7 L9 10 L11 8 L14 12 Z" fill="#4a7a5a"/><rect x="2" y="4" width="12" height="2" fill="#fff"/></svg><div class="row" style="left:59.5px;top:180px">Pictures</div><svg class="abs" style="left:22px;top:205px" width="8" height="10"><path d="M2 1.5 L5.5 5 L2 8.5" fill="none" stroke="#8c8c8c" stroke-width="1.4"/></svg><svg class="abs" style="left:38px;top:202px" width="16" height="16"><rect x="1" y="0.5" width="14" height="15" fill="#333"/><rect x="4" y="2" width="8" height="12" fill="#6ab0e8"/><rect x="4" y="2" width="8" height="5" fill="#e0c040"/><g fill="#ddd"><rect x="1.8" y="2" width="1.2" height="1.5"/><rect x="1.8" y="5.5" width="1.2" height="1.5"/><rect x="1.8" y="9" width="1.2" height="1.5"/><rect x="1.8" y="12.5" width="1.2" height="1.5"/><rect x="13" y="2" width="1.2" height="1.5"/><rect x="13" y="5.5" width="1.2" height="1.5"/><rect x="13" y="9" width="1.2" height="1.5"/><rect x="13" y="12.5" width="1.2" height="1.5"/></g></svg><div class="row" style="left:59.5px;top:200px">Videos</div><svg class="abs" style="left:22px;top:225px" width="8" height="10"><path d="M2 1.5 L5.5 5 L2 8.5" fill="none" stroke="#8c8c8c" stroke-width="1.4"/></svg><svg class="abs" style="left:38px;top:222px" width="16" height="16"><rect x="1" y="11" width="15" height="4" fill="#222"/><rect x="1" y="10" width="15" height="1" fill="#9ab"/><rect x="1" y="1" width="3" height="3" fill="#2aa8e8"/><rect x="4.5" y="1" width="3" height="3" fill="#2aa8e8"/><rect x="1" y="4.5" width="3" height="3" fill="#2aa8e8"/><rect x="4.5" y="4.5" width="3" height="3" fill="#7ad0f8"/><rect x="12" y="12.5" width="2" height="1" fill="#6f6"/></svg><div class="row" style="left:59.5px;top:220px">Local Disk (C:)</div><svg class="abs" style="left:270px;top:3px" width="15" height="12"><path d="M3.5 8 L7.5 4 L11.5 8" fill="none" stroke="#222" stroke-width="1.6"/></svg><div class="abs" style="left:270px;top:17px;width:15px;height:123px;background:#dadada"></div><svg class="abs" style="left:270px;top:226px" width="15" height="12"><path d="M3.5 4 L7.5 8 L11.5 4" fill="none" stroke="#222" stroke-width="1.6"/></svg></div>
  <div class="btn" style="left:16px;width:103px;letter-spacing:-0.25px">Make New Folder</div>
  <div class="btn" style="left:148px;width:73px;border:2px solid #0a4ab0;line-height:18.5px">OK</div>
  <div class="btn" style="left:229px;width:73px">Cancel</div>
  <svg class="abs" style="left:297px;top:9px" width="12" height="12"><path d="M1 1 L11 11 M11 1 L1 11" stroke="#fff" stroke-width="1.1"/></svg>
  <svg class="abs" style="left:306px;top:365px" width="10" height="10"><g fill="#8a8a8a"><rect x="7" y="1" width="2" height="2"/><rect x="4" y="4" width="2" height="2"/><rect x="7" y="4" width="2" height="2"/><rect x="1" y="7" width="2" height="2"/><rect x="4" y="7" width="2" height="2"/><rect x="7" y="7" width="2" height="2"/></g></svg>
  <div class="tip">Date created: 12/18/2019 7:52 PM</div>
  <svg class="abs" style="left:104px;top:205px" width="24" height="28"><path d="M8.5 2 C8.5 0.8 11.5 0.8 11.5 2 V10 C11.7 9 14.5 9 14.5 10.5 V11.5 C14.8 10.3 17.5 10.3 17.5 12 V12.8 C17.8 11.8 20.3 11.8 20.3 13.5 V19 C20.3 23 18 25.8 14 25.8 H12 C9.5 25.8 8 24.5 6.5 22.5 L2.3 16.8 C1.3 15.3 3 13.6 4.6 14.8 L8.5 18 Z" fill="#fff" stroke="#000" stroke-width="1.1"/><path d="M11.5 10 V15 M14.5 11 V15 M17.5 12.5 V15.5" stroke="#000" stroke-width="0.9"/></svg>
</div>

<div id="tb"><svg class="abs" style="left:12.0px;top:8px" width="24" height="24" viewBox="0 0 24 24"><path d="M4 5.2 L10.3 4.3 V11.4 H4 Z M11.3 4.1 L20 2.9 V11.4 H11.3 Z M4 12.4 H10.3 V19.6 L4 18.7 Z M11.3 12.4 H20 V21 L11.3 19.8 Z" fill="#fff"/></svg><svg class="abs" style="left:60.0px;top:8px" width="24" height="24" viewBox="0 0 24 24"><circle cx="14" cy="9.5" r="5.8" fill="none" stroke="#fff" stroke-width="1.4"/><path d="M10 13.5 L4 19.5" stroke="#fff" stroke-width="1.5"/></svg><svg class="abs" style="left:108.0px;top:8px" width="24" height="24" viewBox="0 0 24 24"><circle cx="12" cy="12" r="7" fill="none" stroke="#fff" stroke-width="2"/></svg><svg class="abs" style="left:156.0px;top:8px" width="24" height="24" viewBox="0 0 24 24"><path d="M4 6 H15 M4 18 H15 M5 6 V18 M14 6 V18 M4 9 H15 M4 15 H15" stroke="#fff" stroke-width="1.3" fill="none"/><path d="M18 4 V20 M18 7 H19 M18 17 H19" stroke="#fff" stroke-width="1.4"/><rect x="17" y="10" width="2" height="4" fill="#fff"/></svg><svg class="abs" style="left:206.0px;top:8px" width="24" height="24" viewBox="0 0 24 24"><path d="M3.2 13 C3 6 8 2.5 12.5 2.5 C18.5 2.5 21.5 7 21.5 12.8 H8.2 C8.6 16.5 11.5 18.8 15 18.8 C17.3 18.8 19.5 18 21 17 V21 C19 22.2 16.8 22.6 14.5 22.6 C8.5 22.6 4.2 19 3.2 13 Z M8.3 9.8 H16.5 C16.3 7.2 14.5 5.6 12.3 5.6 C10.2 5.6 8.7 7.3 8.3 9.8 Z" fill="#1d8fe6"/><path d="M3 12 C4 5 9 3 13 3.5 C8.5 4.5 6 8 5.5 11" fill="#3aa8f8"/></svg><svg class="abs" style="left:253.5px;top:8px" width="24" height="24" viewBox="0 0 24 24"><rect x="2" y="5" width="20" height="15" fill="#f8d648"/><rect x="2" y="4" width="8" height="2" fill="#e8a020"/><rect x="2" y="7" width="20" height="2" fill="#fce880"/><path d="M6 20 V12 H18 V20 H15 V15 H9 V20 Z" fill="#3a9ae8"/><rect x="9" y="15" width="6" height="5" fill="#f8d648"/></svg><svg class="abs" style="left:302.0px;top:8px" width="24" height="24" viewBox="0 0 24 24"><rect x="9" y="2" width="14" height="19" fill="#0a64c8"/><rect x="16" y="4" width="6" height="5" fill="#50c8f8"/><rect x="9" y="9" width="14" height="12" fill="#28a8e8"/><path d="M9 13 L23 21 H9 Z" fill="#1e88d8"/><rect x="1" y="6" width="12" height="12" fill="#0b63c0"/><circle cx="7" cy="12" r="3.3" fill="none" stroke="#fff" stroke-width="1.8"/></svg><svg class="abs" style="left:348.0px;top:8px" width="24" height="24" viewBox="0 0 24 24"><rect x="8" y="2.5" width="15" height="6" fill="#5aa8f0"/><rect x="8" y="8.5" width="15" height="6" fill="#2b7cd3"/><rect x="8" y="14.5" width="15" height="6" fill="#185abd"/><rect x="1" y="6" width="12" height="12" fill="#1a4fb8"/><path d="M3 9 L4.5 15 L6.5 10 L8.5 15 L10 9" fill="none" stroke="#fff" stroke-width="1.5"/></svg><svg class="abs" style="left:396.0px;top:8px" width="24" height="24" viewBox="0 0 24 24"><rect x="8" y="2.5" width="15" height="6" fill="#33c481"/><rect x="8" y="8.5" width="15" height="6" fill="#21a366"/><rect x="8" y="14.5" width="15" height="6" fill="#107c41"/><rect x="1" y="6" width="12" height="12" fill="#107c41"/><path d="M4 9 L10 15 M10 9 L4 15" stroke="#fff" stroke-width="1.6"/></svg><svg class="abs" style="left:443.0px;top:8px" width="24" height="24" viewBox="0 0 24 24"><ellipse cx="15" cy="5" rx="7.5" ry="3" fill="#e8607a"/><path d="M7.5 5 V20 C7.5 22 22.5 22 22.5 20 V5 C22.5 7.5 7.5 7.5 7.5 5" fill="#b3172b"/><rect x="1" y="6" width="12" height="12" fill="#a4262c"/><path d="M4 15.5 L7 8.5 L10 15.5 M5.2 13 H8.8" stroke="#fff" stroke-width="1.5" fill="none"/></svg><svg class="abs" style="left:490.0px;top:8px" width="24" height="24" viewBox="0 0 24 24"><circle cx="14" cy="12" r="9.5" fill="#ed6c47"/><path d="M14 2.5 A9.5 9.5 0 0 1 23.5 12 H14 Z" fill="#ff8f6b"/><rect x="1" y="6" width="12" height="12" fill="#c43e1c"/><path d="M5 16 V8.5 H8 C10 8.5 10 12.5 8 12.5 H5" stroke="#fff" stroke-width="1.6" fill="none"/></svg><svg class="abs" style="left:536.0px;top:8px" width="24" height="24" viewBox="0 0 24 24"><path d="M13 1 L23 10 V20 L13 11 Z" fill="#41a5ee"/><path d="M8 10 L16 17 V22 L8 22 Z" fill="#2b7cd3"/><rect x="1" y="6" width="12" height="12" fill="#185abd"/><path d="M3.5 8.5 L7 15.5 L10.5 8.5" stroke="#fff" stroke-width="1.6" fill="none"/></svg><svg class="abs" style="left:584.0px;top:8px" width="24" height="24" viewBox="0 0 24 24"><rect x="8" y="2" width="12" height="6" fill="#33c481"/><rect x="10" y="8" width="12" height="7" fill="#21a366"/><rect x="12" y="15" width="12" height="6" fill="#107c41"/><rect x="1" y="6" width="12" height="12" fill="#107c41"/><path d="M5 16 V8.5 H8 C10 8.5 10 12.5 8 12.5 H5" stroke="#fff" stroke-width="1.6" fill="none"/></svg><svg class="abs" style="left:631.0px;top:8px" width="24" height="24" viewBox="0 0 24 24"><rect x="8" y="2" width="15" height="8" fill="#37c6d0"/><rect x="8" y="10" width="15" height="6" fill="#1a9ba1"/><rect x="8" y="16" width="15" height="5" fill="#077568"/><rect x="1" y="6" width="12" height="12" fill="#077568"/><path d="M5 16 V8.5 H8 C10 8.5 10 12.5 8 12.5 H5" stroke="#fff" stroke-width="1.6" fill="none"/></svg><svg class="abs" style="left:678.0px;top:8px" width="24" height="24" viewBox="0 0 24 24"><path d="M17 1 L23 4 V20 L17 23 L6 13 L2.5 16 L1 15 V9 L2.5 8 L6 11 Z M17 7 L10 12 L17 17 Z" fill="#9a4fe0"/><path d="M17 1 L23 4 V20 L17 23 Z" fill="#c080ff"/></svg><svg class="abs" style="left:725.0px;top:8px" width="24" height="24" viewBox="0 0 24 24"><circle cx="12" cy="12" r="10.5" fill="#f0c020"/><circle cx="12" cy="12" r="9" fill="#fbd044"/><path d="M12 6 V15" stroke="#fff" stroke-width="1.5"/><circle cx="10.5" cy="15.5" r="2" fill="#fff"/><path d="M12 6 Q15 7 14.5 9.5" stroke="#fff" stroke-width="1.2" fill="none"/></svg><svg class="abs" style="left:772.0px;top:8px" width="24" height="24" viewBox="0 0 24 24"><circle cx="10" cy="10" r="8.5" fill="#e82020"/><circle cx="8" cy="8" r="5.5" fill="#fff"/><path d="M14 4 Q19 8 17 14" stroke="#f8a030" stroke-width="2" fill="none"/><rect x="11" y="14" width="12" height="8" fill="#eee"/><circle cx="17" cy="18" r="2.6" fill="#333"/><circle cx="17" cy="18" r="1.2" fill="#ddd"/></svg><svg class="abs" style="left:819.0px;top:8px" width="24" height="24" viewBox="0 0 24 24"><ellipse cx="12" cy="13" rx="7" ry="9" fill="#111"/><ellipse cx="12" cy="15.5" rx="5" ry="5.5" fill="#fff"/><circle cx="10" cy="7.5" r="1.4" fill="#fff"/><circle cx="14" cy="7.5" r="1.4" fill="#fff"/><ellipse cx="12" cy="10" rx="3" ry="1.2" fill="#f8b800"/><path d="M5 12 Q12 14 19 12 L19 14 Q12 16 5 14 Z" fill="#e02020"/><ellipse cx="8" cy="22" rx="3" ry="1.2" fill="#f8b800"/><ellipse cx="16" cy="22" rx="3" ry="1.2" fill="#f8b800"/></svg><svg class="abs" style="left:866.0px;top:8px" width="24" height="24" viewBox="0 0 24 24"><rect x="1.5" y="1.5" width="21" height="21" fill="none" stroke="#fff" stroke-width="1.6"/><path d="M12 7 C8 5 5 8 5.5 12 C6 17 9 19 12 18 C15 19 18 17 18.5 12 C19 8 16 5 12 7 Z" fill="none" stroke="#fff" stroke-width="1.3"/><path d="M12 7 Q12 4 14 3" stroke="#fff" stroke-width="1.2" fill="none"/><rect x="17" y="19" width="3" height="1.5" fill="#fff"/></svg><svg class="abs" style="left:912.0px;top:8px" width="24" height="24" viewBox="0 0 24 24"><circle cx="12" cy="12" r="11" fill="#1b3f6a"/><circle cx="12" cy="12" r="10" fill="#2a6ea8"/><path d="M2 14 L9 17" stroke="#fff" stroke-width="2.5"/><circle cx="15.5" cy="9" r="4" fill="none" stroke="#fff" stroke-width="1.8"/><circle cx="9.5" cy="16.5" r="2.5" fill="#fff"/></svg><svg class="abs" style="left:960.0px;top:8px" width="24" height="24" viewBox="0 0 24 24"><path d="M2 14 L8 20 L21 7 L17.5 3.5 L8 13 L5.5 10.5 Z" fill="#3e8ee8"/><path d="M2 14 L5.5 10.5 L8 13 L8 20 Z" fill="#1a5cc0"/><path d="M17.5 3.5 L21 7 L12 16 L10 14 Z" fill="#6ab6ff"/></svg><svg class="abs" style="left:1007.0px;top:8px" width="24" height="24" viewBox="0 0 24 24"><rect x="0.5" y="0.5" width="23" height="23" rx="3" fill="#0a0a0a"/><ellipse cx="12" cy="12" rx="9.5" ry="7.5" fill="none" stroke="#c060ff" stroke-width="1.6"/><path d="M12 4.5 A9.5 7.5 0 0 1 21.5 12" fill="none" stroke="#40e0ff" stroke-width="1.6"/><path d="M9.5 7.5 V16.5 L16.5 12 Z" fill="#fff"/></svg><svg class="abs" style="left:1054.0px;top:8px" width="24" height="24" viewBox="0 0 24 24"><rect x="0.5" y="0.5" width="23" height="23" rx="3" fill="#0a0a0a"/><path d="M4 5 V8 M4 5 H7 M20 5 V8 M4 17 V14 M4 17 H7 M20 17 V14 M20 17 H17" stroke="#80e0f0" stroke-width="1.2" fill="none"/><path d="M10 8 V14 L15 11 Z" fill="#40d8f0"/><path d="M12 17 V20 M8 20 H16" stroke="#80e0f0" stroke-width="1"/><circle cx="19" cy="4" r="2" fill="#f06070"/></svg><svg class="abs" style="left:1101.0px;top:8px" width="24" height="24" viewBox="0 0 24 24"><circle cx="14" cy="9" r="7" fill="#3a78c8"/><path d="M8 8 Q12 3 19 6 Q17 10 13 10 Z" fill="#7ac848"/><path d="M3 13 C2 8 6 6 10 7 C7 9 6 12 8 15 Z" fill="#f08020"/><path d="M8 15 Q12 20 18 16" stroke="#e8d020" stroke-width="3" fill="none"/><path d="M11 12 L22 15 L15 17 L12 22 Z" fill="#30c030"/></svg><svg class="abs" style="left:1148.0px;top:8px" width="24" height="24" viewBox="0 0 24 24"><rect x="1.5" y="1.5" width="21" height="21" rx="2" fill="#da1f26"/><path d="M5 13 C5 9 9 8 11 11 L13 13 C15 16 19 15 19 12 C19 9 15 8 13 11 L11 13 C9 16 5 16 5 13 Z" fill="none" stroke="#fff" stroke-width="1.2"/></svg><svg class="abs" style="left:1195.0px;top:8px" width="24" height="24" viewBox="0 0 24 24"><rect x="1.5" y="1.5" width="21" height="21" rx="3" fill="#001e36" stroke="#31a8ff" stroke-width="1.4"/><text x="4.3" y="16.5" font-family="Liberation Sans" font-weight="bold" font-size="11.5" fill="#eaf6ff">Ps</text></svg><svg class="abs" style="left:1242.0px;top:8px" width="24" height="24" viewBox="0 0 24 24"><path d="M3 3 H21" stroke="#4ab8f8" stroke-width="2"/><path d="M12 3 V22" stroke="#4ab8f8" stroke-width="2.4"/><path d="M4 4 L20 21" stroke="#e84040" stroke-width="1.6"/><path d="M20 4 L4 21" stroke="#a8e040" stroke-width="1.6"/><path d="M6 6 L14 21" stroke="#40c8a0" stroke-width="1.2"/></svg><div class="abs" style="left:1278px;top:0;width:46px;height:40px;background:#1c6a96"></div><svg class="abs" style="left:1289.0px;top:8px" width="24" height="24" viewBox="0 0 24 24"><circle cx="12" cy="12" r="11" fill="#c82808"/><circle cx="12" cy="12" r="9" fill="#ffd27a"/><path d="M1.5 13 A10.5 10.5 0 0 0 22.5 13 A10.5 9 0 0 1 1.5 13" fill="#2a0a00"/></svg><svg class="abs" style="left:1331.0px;top:10.5px" width="16" height="16" viewBox="0 0 16 16"><path d="M2 2 H14 M8 2 V15" stroke="#4ab8f8" stroke-width="1.6"/><path d="M3 3 L13 14" stroke="#e84040" stroke-width="1.2"/><path d="M13 3 L3 14" stroke="#a8e040" stroke-width="1.2"/></svg><svg class="abs" style="left:1355.0px;top:10.5px" width="16" height="16" viewBox="0 0 16 16"><rect x="0.7" y="1.7" width="14.6" height="12.6" rx="2" fill="#0a0a0a" stroke="#60d8f8" stroke-width="1.2"/><text x="2.3" y="11.8" font-family="Liberation Sans" font-weight="bold" font-size="8.2" fill="#fff">SB</text></svg><svg class="abs" style="left:1379.0px;top:10.5px" width="16" height="16" viewBox="0 0 16 16"><circle cx="8" cy="8" r="7.5" fill="#f0a020"/><path d="M9 2 L5 9 H8 L7 14 L11 7 H8 Z" fill="#fff"/></svg><svg class="abs" style="left:1403.0px;top:10.5px" width="16" height="16" viewBox="0 0 16 16"><path d="M8 1 C13 1 14.5 5 14 8 C13 12 10 15 8 15 C6 15 3 12 2 8 C1.5 5 3 1 8 1 Z" fill="#e8e8e8"/><path d="M3 8 Q8 10 8 15 Q8 10 13 8 Q10 13 8 15 Q6 13 3 8" fill="#40b040"/><path d="M5 5 L8 9 L11 5 Z" fill="#888"/></svg><svg class="abs" style="left:1427.0px;top:10.5px" width="16" height="16" viewBox="0 0 16 16"><circle cx="10" cy="6" r="4.5" fill="#3a78c8"/><path d="M2 9 C1 5 4 4 7 5 Q4 8 6 10 Z" fill="#f08020"/><path d="M5 10 Q8 14 13 11" stroke="#e8d020" stroke-width="2.2" fill="none"/><path d="M8 8 L15 10 L11 12 L9 15 Z" fill="#30c030"/></svg><svg class="abs" style="left:1451.0px;top:10.5px" width="16" height="16" viewBox="0 0 16 16"><rect x="2" y="0.5" width="12" height="15" rx="6" fill="#1f7ae0"/><path d="M5 5 L11 10.5 L8 13 V3 L11 5.5 L5 11" stroke="#fff" stroke-width="1" fill="none"/></svg><svg class="abs" style="left:1475.0px;top:10.5px" width="16" height="16" viewBox="0 0 16 16"><path d="M7 1 L13 3 V8 C13 12 10 14 7 15 C4 14 1 12 1 8 V3 Z" fill="#fff"/><path d="M7 1 V15 M1 8 H13" stroke="#222" stroke-width="0.8"/><circle cx="11.5" cy="11.5" r="4" fill="#20a050"/><path d="M9.5 11.5 L11 13 L13.5 10" stroke="#fff" stroke-width="1.1" fill="none"/></svg><svg class="abs" style="left:1499.0px;top:10.5px" width="16" height="16" viewBox="0 0 16 16"><circle cx="8" cy="8" r="6.8" fill="none" stroke="#c8d8e0" stroke-width="1.1"/><rect x="6" y="5" width="1.5" height="1.5" fill="#c8d8e0"/><rect x="6" y="9" width="1.5" height="1.5" fill="#c8d8e0"/><rect x="9" y="7" width="1.5" height="1.5" fill="#c8d8e0"/></svg><svg class="abs" style="left:1523.0px;top:10.5px" width="16" height="16" viewBox="0 0 16 16"><rect x="1.5" y="1.5" width="13" height="9" fill="#a8b8a8" stroke="#fff" stroke-width="1.4"/><path d="M4 3 L12 9 M12 3 L4 9" stroke="#e02020" stroke-width="1.6"/><rect x="1" y="12.5" width="5" height="2.5" fill="#fff"/><rect x="10" y="12.5" width="5" height="2.5" fill="#fff"/></svg><svg class="abs" style="left:1547.0px;top:10.5px" width="16" height="16" viewBox="0 0 16 16"><path d="M2 9 C2 5 6 5 8 8 C10 11 14 11 14 8 C14 5 10 5 8 8 C6 11 2 11 2 9 Z" fill="none" stroke="#fff" stroke-width="2.2"/><path d="M2 9 C2 5 6 5 8 8 C10 11 14 11 14 8 C14 5 10 5 8 8 C6 11 2 11 2 9 Z" fill="none" stroke="#000" stroke-width="1"/></svg><svg class="abs" style="left:1571.0px;top:10.5px" width="16" height="16" viewBox="0 0 16 16"><rect x="3" y="3" width="12" height="8" fill="none" stroke="#fff" stroke-width="1.1"/><path d="M9 11 V14 M5 14 H13" stroke="#fff" stroke-width="1.1"/><rect x="0.5" y="1" width="4" height="4" fill="none" stroke="#fff" stroke-width="1"/></svg><svg class="abs" style="left:1595.0px;top:10.5px" width="16" height="16" viewBox="0 0 16 16"><path d="M5 2 L14 6 L9 10 L14 14 L7 14 Z" fill="#4a90e0"/><rect x="1" y="7" width="5" height="3" fill="#f07020"/><rect x="10" y="7" width="5" height="3" fill="#40c040"/></svg><svg class="abs" style="left:1619.0px;top:10.5px" width="16" height="16" viewBox="0 0 16 16"><circle cx="8" cy="8" r="7.5" fill="#1b3f6a"/><circle cx="8" cy="8" r="6.8" fill="#2a6ea8"/><circle cx="10.5" cy="6" r="2.8" fill="none" stroke="#fff" stroke-width="1.3"/><path d="M1 10 L6 11.5" stroke="#fff" stroke-width="1.8"/><circle cx="6" cy="11" r="1.8" fill="#fff"/></svg><svg class="abs" style="left:1643.0px;top:10.5px" width="16" height="16" viewBox="0 0 16 16"><rect x="5" y="5" width="10" height="7" fill="none" stroke="#fff" stroke-width="1.1"/><rect x="6.5" y="6.5" width="5" height="4" fill="#fff"/><path d="M2 3 V8 M1 3 H3 M2 8 V11 H5" stroke="#fff" stroke-width="1.1" fill="none"/></svg><svg class="abs" style="left:1667.0px;top:10.5px" width="16" height="16" viewBox="0 0 16 16"><ellipse cx="8" cy="9" rx="5" ry="6.5" fill="#111"/><ellipse cx="8" cy="10.5" rx="3.5" ry="4" fill="#fff"/><path d="M3 8.5 Q8 10 13 8.5 L13 10 Q8 11.5 3 10 Z" fill="#e02020"/><ellipse cx="8" cy="6.3" rx="2" ry="0.9" fill="#f8b800"/></svg><svg class="abs" style="left:1691.0px;top:10.5px" width="16" height="16" viewBox="0 0 16 16"><path d="M1 6 H4 L8 2.5 V13.5 L4 10 H1 Z" fill="none" stroke="#fff" stroke-width="1"/><path d="M10 5.5 Q11.5 8 10 10.5 M12 4 Q14.5 8 12 12" stroke="#fff" stroke-width="1" fill="none"/><path d="M14 2.5 Q17 8 14 13.5" stroke="#5a8ab0" stroke-width="1" fill="none"/></svg><svg class="abs" style="left:1715.0px;top:10.5px" width="16" height="16" viewBox="0 0 16 16"><circle cx="8" cy="8" r="6.5" fill="#f0f0f0"/><path d="M5 7 L8 8.5 L11 8" stroke="#c03030" stroke-width="0.9" fill="none"/></svg><svg class="abs" style="left:1743.0px;top:10.5px" width="16" height="16" viewBox="0 0 16 16"><path d="M5 14 Q2 14 3 11 L11 2 Q13 1 14 3 L6 12" fill="none" stroke="#fff" stroke-width="1.2"/><path d="M9 10 H15" stroke="#fff" stroke-width="1.2"/></svg><div class="abs" style="left:1773px;top:12px;color:#fff;font-size:11.8px;line-height:12px">ENG</div><div class="abs" style="left:1800px;top:0px;width:72px;text-align:center;color:#fff;font-size:11.8px;line-height:18px">7:52 PM<br>12/18/2019</div><svg class="abs" style="left:1879.0px;top:10.5px" width="16" height="16" viewBox="0 0 16 16"><path d="M1.5 2.5 H14.5 V12.5 H8 L5 15 V12.5 H1.5 Z" fill="#fff"/><path d="M4 5.5 H12 M4 8 H12 M4 10.5 H9" stroke="#0b3e6a" stroke-width="1.1"/><circle cx="13" cy="12.5" r="2.5" fill="#0b3e6a"/><path d="M11.8 12.8 L13 11.3 L14 13" stroke="#fff" stroke-width="0.8" fill="none"/></svg><div class="abs" style="left:1914px;top:0;width:1px;height:40px;background:#7a9ac0"></div><div class="ind" style="left:199px;width:38px"></div><div class="ind" style="left:389px;width:37px"></div><div class="ind" style="left:812px;width:37px"></div><div class="ind" style="left:906px;width:38px"></div><div class="ind" style="left:1047px;width:37px"></div><div class="ind" style="left:1093px;width:38px"></div><div class="ind" style="left:1140px;width:39px"></div><div class="ind" style="left:1187px;width:39px"></div><div class="ind" style="left:1234px;width:39px"></div><div class="ind" style="left:1278px;width:46px"></div></div>
</body></html>
